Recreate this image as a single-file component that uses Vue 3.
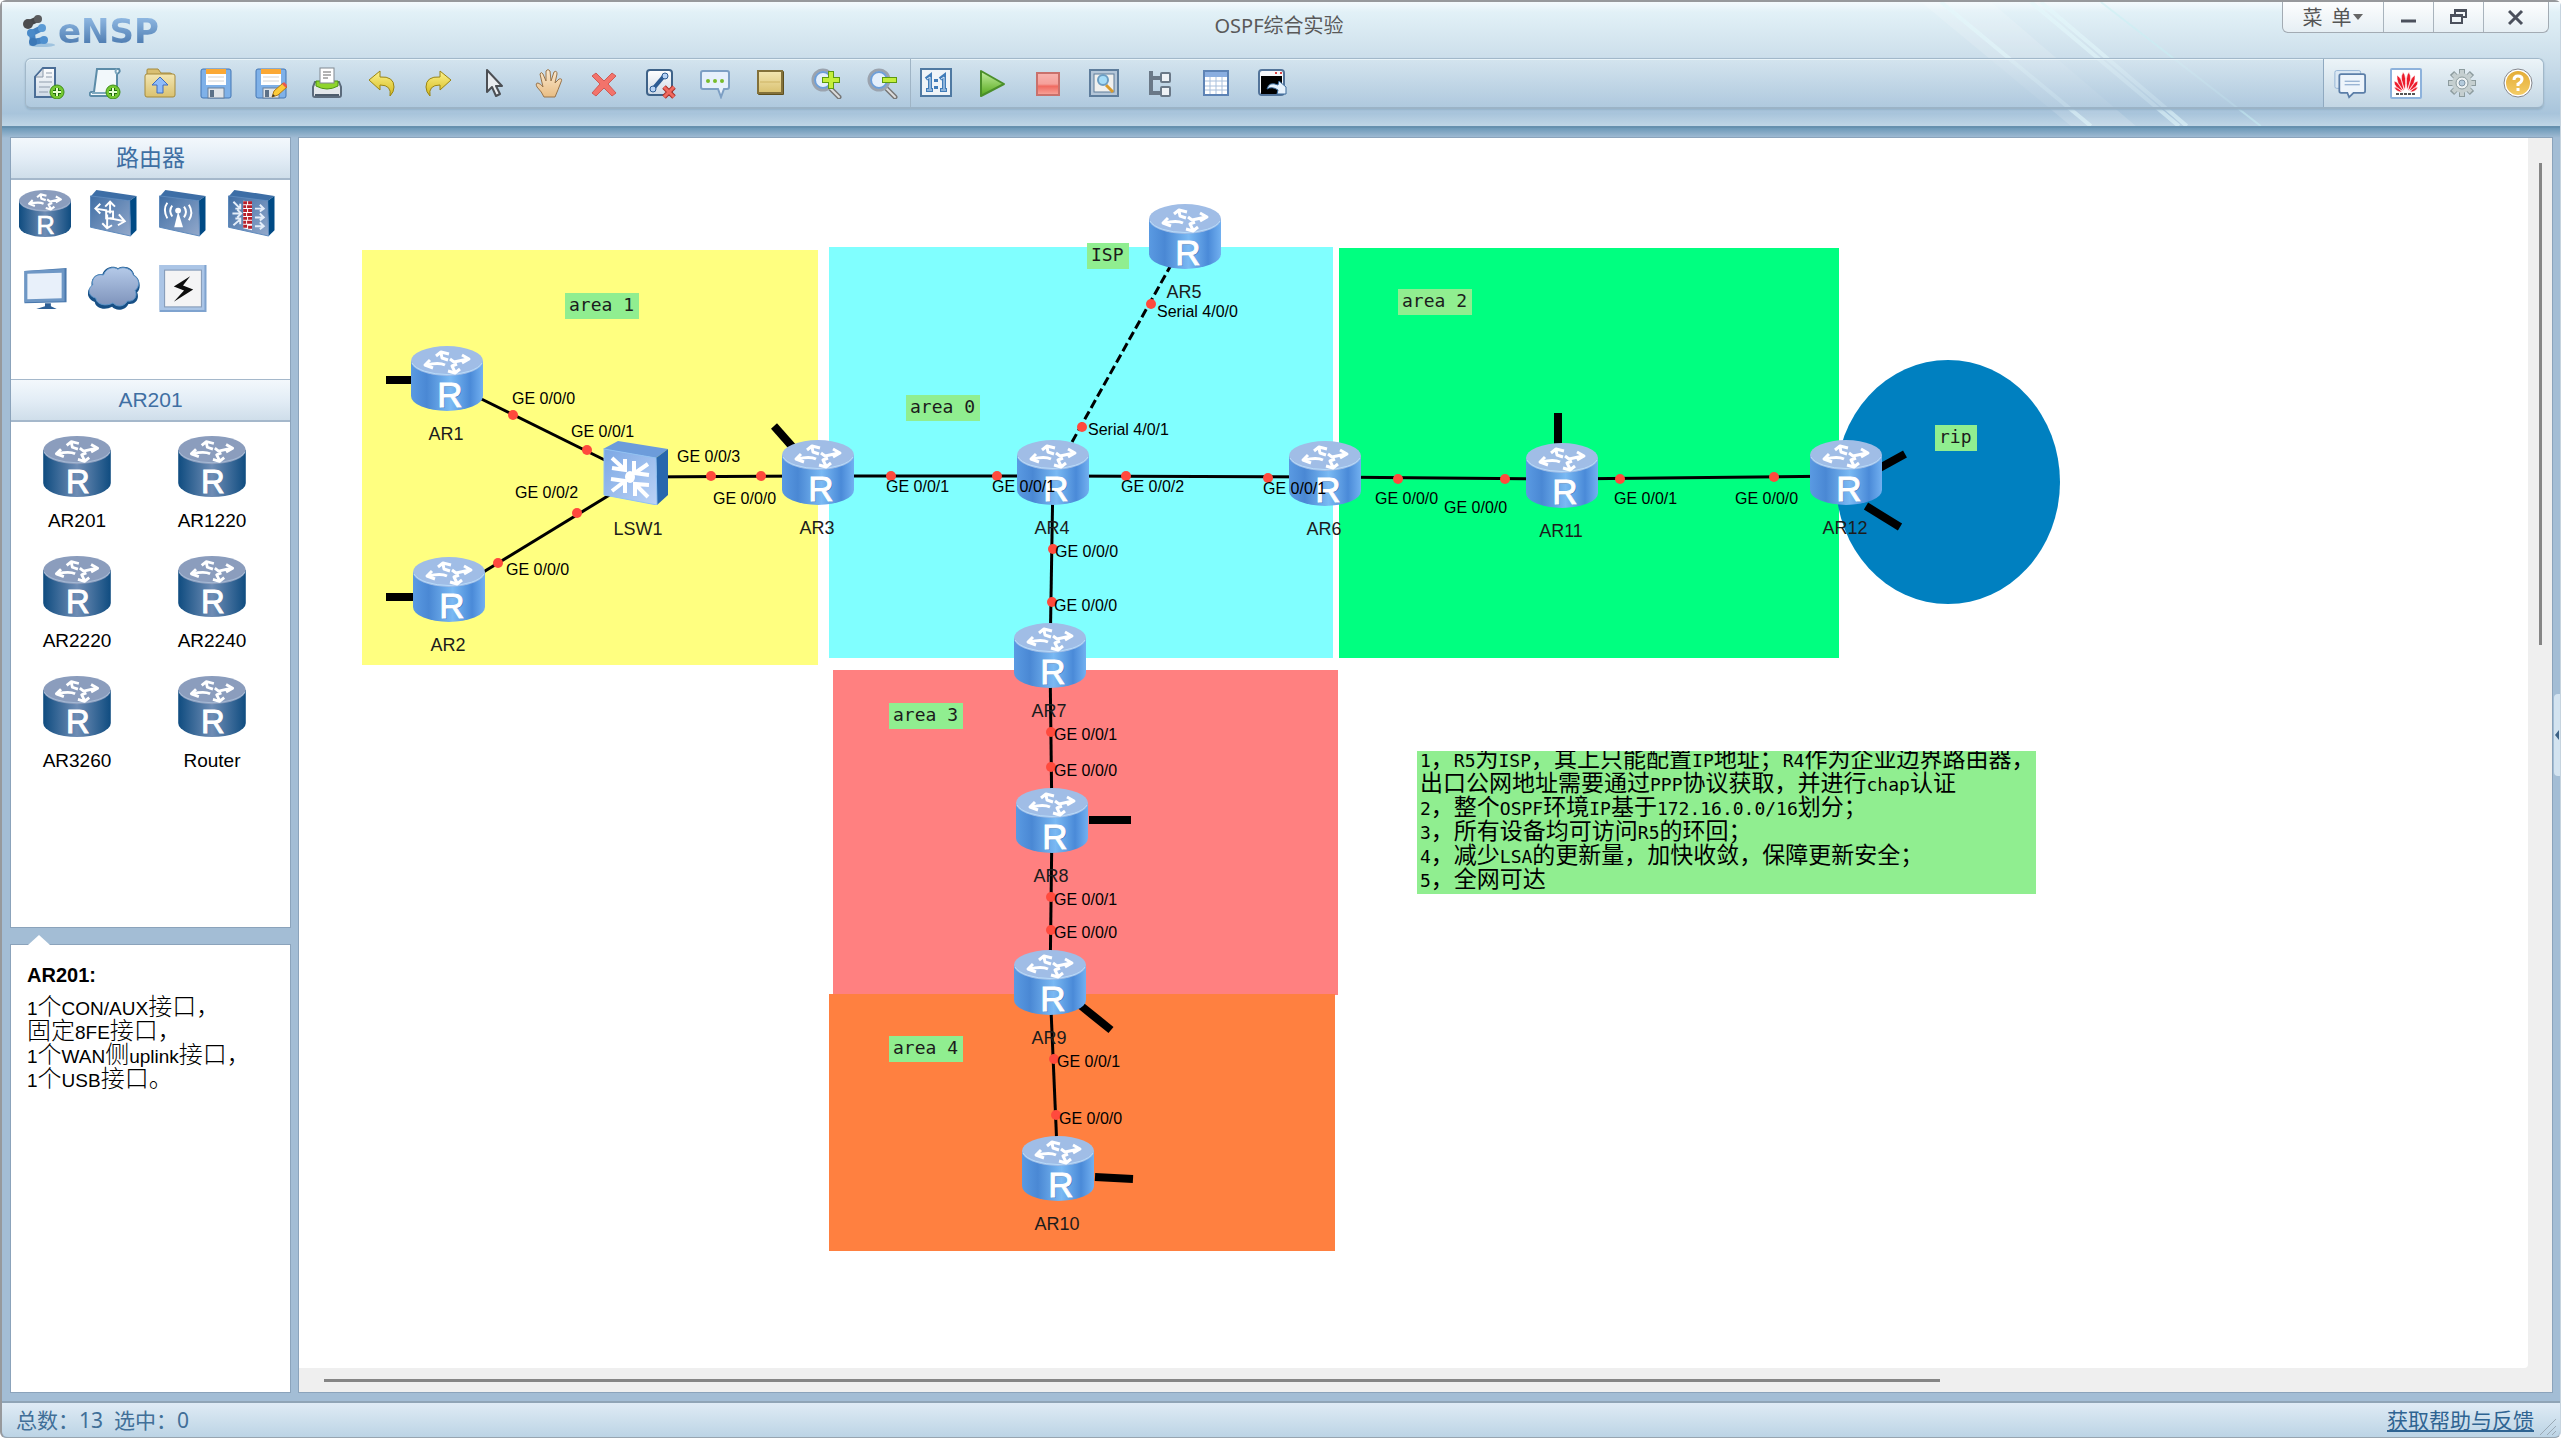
<template>
  <div class="window">
    <!-- shared drawings -->
    <svg class="sprite" width="0" height="0" aria-hidden="true">
      <defs>
        <linearGradient id="g-router">
          <stop offset="0" stop-color="#5a9ae2" />
          <stop offset=".22" stop-color="#4a88d4" />
          <stop offset=".55" stop-color="#7ab9f3" />
          <stop offset=".82" stop-color="#4a8ad8" />
          <stop offset="1" stop-color="#72b0f0" />
        </linearGradient>
        <linearGradient id="g-router-dark">
          <stop offset="0" stop-color="#0f4c80" />
          <stop offset=".5" stop-color="#6f8db5" />
          <stop offset="1" stop-color="#0f4c80" />
        </linearGradient>
        <linearGradient id="g-face" x2="1" y2="1">
          <stop offset="0" stop-color="#7ba7e4" />
          <stop offset="1" stop-color="#bcd3f6" />
        </linearGradient>
        <linearGradient id="g-face-dark" x2="1" y2="1">
          <stop offset="0" stop-color="#3f6ea5" />
          <stop offset="1" stop-color="#93a9cb" />
        </linearGradient>
        <linearGradient id="g-cloud" x2="0" y2="1">
          <stop offset="0" stop-color="#b4c9e8" />
          <stop offset="1" stop-color="#7e93bb" />
        </linearGradient>
        <linearGradient id="g-paper" x2="0" y2="1">
          <stop offset="0" stop-color="#ffffff" />
          <stop offset="1" stop-color="#cdd9e6" />
        </linearGradient>
        <linearGradient id="g-gold" x2="0" y2="1">
          <stop offset="0" stop-color="#f3e6b2" />
          <stop offset="1" stop-color="#d9c170" />
        </linearGradient>
        <linearGradient id="g-yellow" x2="0" y2="1">
          <stop offset="0" stop-color="#fdf38c" />
          <stop offset="1" stop-color="#d3b81c" />
        </linearGradient>
        <linearGradient id="g-green" x2="0" y2="1">
          <stop offset="0" stop-color="#c4efa0" />
          <stop offset="1" stop-color="#55a81c" />
        </linearGradient>
        <linearGradient id="g-red" x2="0" y2="1">
          <stop offset="0" stop-color="#f8b4b0" />
          <stop offset=".5" stop-color="#f5a09a" />
          <stop offset=".6" stop-color="#f06a60" />
          <stop offset="1" stop-color="#f8a69c" />
        </linearGradient>
        <linearGradient id="g-skin" x2="0" y2="1">
          <stop offset="0" stop-color="#fbe9cf" />
          <stop offset="1" stop-color="#e8bd84" />
        </linearGradient>
        <linearGradient id="g-help" x2="0" y2="1">
          <stop offset="0" stop-color="#e3ab35" />
          <stop offset="1" stop-color="#f5cd66" />
        </linearGradient>

        <g id="router-arrows" fill="none" stroke="#fff" stroke-width="3" stroke-linejoin="round">
          <path d="M25 10 30 6 38 8M30 7 31 12 37 14" />
          <path d="M51 9 58 13 51 17M39 13 43 16 57 13" />
          <path d="M37 25 44 27 49 23M46 18 41 20 44 26" />
          <path d="M19 14 14 19 22 22M34 19Q28 16 15 19" />
        </g>

        <symbol id="d-router" viewBox="0 0 72 65">
          <path d="M0 15V50A36 15 0 0 0 72 50V15Z" fill="url(#g-router)" />
          <ellipse cx="36" cy="15" rx="36" ry="15" fill="#a0bde6" />
          <path d="M1 17A36 15 0 0 0 71 17" fill="none" stroke="#b9dcfa" stroke-width="1" />
          <use href="#router-arrows" />
          <text x="40" y="62" class="letter" fill="#3a74b8">R</text>
          <text x="39" y="61" class="letter" fill="#fff" stroke="#fff">R</text>
        </symbol>
        <symbol id="d-router-dark" viewBox="0 0 72 65">
          <path d="M0 15V50A36 15 0 0 0 72 50V15Z" fill="url(#g-router-dark)" />
          <ellipse cx="36" cy="15" rx="36" ry="15" fill="#8b9dbd" />
          <path d="M1 17A36 15 0 0 0 71 17" fill="none" stroke="#a9bdd8" stroke-width="1" />
          <use href="#router-arrows" />
          <text x="37" y="61" class="letter" fill="#fff" stroke="#fff">R</text>
        </symbol>
        <symbol id="d-switch" viewBox="0 0 66 64">
          <path d="M0 8 15 0 65 8 53 17Z" fill="#6c9cdb" />
          <path d="M53 17 65 8V54L54 64Z" fill="#2867ad" />
          <path d="M1 8 53 17 54 64 1 54Z" fill="url(#g-face)" stroke="#8fc0f5" />
          <g fill="none" stroke="#fff" stroke-width="4">
            <path d="M9 17 22 29M22 18V29L9 27" />
            <path d="M45 23 32 32M31 20V32L46 34" />
            <path d="M9 50 22 40M8 38 22 40V52" />
            <path d="M45 56 32 43M46 44 32 43V55" />
          </g>
          <ellipse cx="27" cy="36" rx="5" ry="6" fill="#fff" />
        </symbol>

        <g id="box-dark">
          <path d="M0 7 6 0 47 6 40 11Z" fill="#3d6ea6" />
          <path d="M40 11 47 6V41L41 47Z" fill="#004a85" />
          <path d="M0 6 40 11 41 47 0 38Z" fill="url(#g-face-dark)" stroke="#5c88bb" />
        </g>
        <symbol id="c-router" viewBox="0 0 72 65"><use href="#d-router-dark" width="72" height="65" /></symbol>
        <symbol id="c-switch" viewBox="0 0 48 48">
          <use href="#box-dark" />
          <g fill="none" stroke="#fff" stroke-width="2">
            <path d="M20 24V13M15 17 20 12 25 17M17 25V38M12 34 17 39 22 36M17 21 5 19M10 14 5 19 10 24M20 29 35 32M29 25 35 32 28 36" />
            <rect x="16" y="22" width="7" height="7" />
          </g>
        </symbol>
        <symbol id="c-wlan" viewBox="0 0 48 48">
          <use href="#box-dark" />
          <path d="M19 22 24 38H15Z" fill="#fff" />
          <circle cx="19" cy="21" r="3" fill="#fff" />
          <path d="M13 16Q9 21 13 27M8 13Q3 20 8 29M25 17Q29 22 25 28M30 15Q35 23 30 31" fill="none" stroke="#fff" stroke-width="2" />
        </symbol>
        <symbol id="c-firewall" viewBox="0 0 48 48">
          <use href="#box-dark" />
          <path d="M15 11 24 12V41L15 39Z" fill="#fff" />
          <path d="M15 13H19M20 13H24M15 17H18M19 17H24M15 21H19M20 21H24M15 25H18M19 25H24M15 29H19M20 29H24M15 33H18M19 33H24M15 37H19M20 38H24" stroke="#b71f2a" stroke-width="3" />
          <path d="M5 12 12 19M7 19H12V14M4 24H12M9 20 13 24 9 28M5 36 12 30M7 29H12V35M27 19H36M32 15 36 19 32 22M27 28H36M32 24 36 28 32 31M27 37H36M32 33 36 37 32 40" fill="none" stroke="#e4edf8" stroke-width="2" />
        </symbol>
        <symbol id="c-pc" viewBox="0 0 48 48">
          <path d="M3 6 46 3V38L3 39Z" fill="#4978ad" />
          <path d="M3 6 44 4V37L3 38Z" fill="#6e97c5" />
          <path d="M6 9 41 8V34L6 35Z" fill="#e8f0fa" />
          <path d="M24 39H30V42L36 45H15L24 42Z" fill="#2c5f96" />
        </symbol>
        <symbol id="c-cloud" viewBox="0 0 54 46">
          <path d="M7 37C-2 34-2 24 4 21 2 13 8 7 15 8 18 0 27-1 31 2 38-2 47 2 48 9 55 13 55 24 51 27 54 34 49 40 42 39 38 47 28 46 25 42 18 46 8 44 7 37Z" fill="#174f85" />
          <path d="M8 33C0 31-1 23 5 19 3 13 9 7 16 9 19 1 27 0 31 3 37-1 46 3 47 9 54 13 54 21 49 25 52 32 47 37 41 36 37 43 29 42 26 38 19 42 9 40 8 33Z" fill="url(#g-cloud)" stroke="#5b93c7" stroke-width="1" />
        </symbol>
        <symbol id="c-link" viewBox="0 0 46 46">
          <rect width="46" height="46" fill="#7fa3cf" />
          <rect width="44" height="44" fill="#abc5e6" />
          <rect x="5" y="5" width="36" height="36" fill="#f4f4f5" stroke="#8298b5" />
          <path d="M30 11 14 21 24 25 14 36 33 24 23 20Z" fill="#0d0d0d" />
        </symbol>

        <g id="plus-badge">
          <circle cx="24" cy="25" r="7" fill="#74c832" stroke="#3f8f18" />
          <path d="M24 21V29M20 25H28" stroke="#1f6b0b" stroke-width="4" />
          <path d="M24 21V29M20 25H28" stroke="#e6ffd0" stroke-width="2" />
        </g>
        <g id="floppy">
          <rect x="1" y="2" width="30" height="29" rx="2" fill="#7fb1e8" stroke="#4577b4" />
          <rect x="6" y="3" width="20" height="15" fill="#fff" />
          <rect x="6" y="2" width="20" height="5" fill="#fba834" />
          <path d="M8 10H24M8 14H24" stroke="#d4d4d4" />
          <rect x="8" y="21" width="16" height="10" fill="#e0e4e8" stroke="#68809c" />
          <rect x="10" y="23" width="4" height="7" fill="#5c7188" />
        </g>
        <g id="lens">
          <path d="M19 20 29 30" stroke="#777" stroke-width="5" stroke-linecap="round" />
          <path d="M19 20 29 30" stroke="#ddd" stroke-width="2" stroke-linecap="round" />
          <circle cx="13" cy="13" r="10" fill="#dbe9fa" stroke="#9ba3ae" stroke-width="3" />
          <circle cx="13" cy="13" r="8" fill="#e4effc" stroke="#6d9ed8" stroke-width="2" />
        </g>
        <g id="tiny-cross">
          <path d="M20 20 30 30M30 20 20 30" stroke="#a82f28" stroke-width="5" />
          <path d="M20 20 30 30M30 20 20 30" stroke="#f0695f" stroke-width="3" />
        </g>

        <symbol id="i-new" viewBox="0 0 32 32">
          <path d="M10 1H22V30H2V10Z" fill="url(#g-paper)" stroke="#4a6d96" stroke-width="2" />
          <path d="M10 2V10H3" fill="#dde3ea" stroke="#8b99aa" />
          <path d="M6 15H19M6 20H17M6 25H15M13 6H19M13 10H19" stroke="#8f9cac" />
          <use href="#plus-badge" />
        </symbol>
        <symbol id="i-scroll" viewBox="0 0 32 32">
          <path d="M8 2H30Q32 5 28 7V29H2Q-1 27 2 25H5Z" fill="#f2f8fb" stroke="#5c8ca8" stroke-width="2" />
          <path d="M28 2Q25 4 28 7M3 26H20" fill="none" stroke="#7ea8bf" stroke-width="2" />
          <use href="#plus-badge" />
        </symbol>
        <symbol id="i-open" viewBox="0 0 32 32">
          <path d="M3 8V3Q3 2 4 2H14L17 6H26Q28 6 28 8Z" fill="#d9bf72" stroke="#a58a3c" />
          <rect x="1" y="7" width="30" height="23" rx="2" fill="url(#g-gold)" stroke="#a58a3c" />
          <path d="M16 10 24 18H19V26H13V18H8Z" fill="#8fbcfa" stroke="#3c6bc0" />
        </symbol>
        <symbol id="i-save" viewBox="0 0 32 32"><use href="#floppy" /></symbol>
        <symbol id="i-saveas" viewBox="0 0 32 32">
          <use href="#floppy" />
          <path d="M17 30 19 24 28 16 32 20 23 28Z" fill="#fccb38" stroke="#b07a14" />
          <path d="M27 17 29 15 32 18 31 21Z" fill="#e9584c" />
          <path d="M17 30 18 27 20 29Z" fill="#333" />
        </symbol>
        <symbol id="i-print" viewBox="0 0 32 32">
          <path d="M4 15H28L30 20V28Q30 30 28 30H4Q2 30 2 28V20Z" fill="#e3e7eb" stroke="#5b6b7c" stroke-width="2" />
          <path d="M5 14H27V19Q16 25 5 19Z" fill="#8fd42c" stroke="#4d9412" />
          <rect x="9" y="1" width="14" height="15" fill="#fff" stroke="#808890" />
          <path d="M12 5H20M12 8H20M12 11H17" stroke="#666" />
          <path d="M4 28H28" stroke="#4e5d6d" stroke-width="2" />
        </symbol>
        <symbol id="i-undo" viewBox="0 0 32 32">
          <path d="M3 13 14 4V10Q28 9 28 20 28 25 24 29 26 18 14 18V23Z" fill="url(#g-yellow)" stroke="#9a8412" stroke-linejoin="round" />
        </symbol>
        <symbol id="i-redo" viewBox="0 0 32 32">
          <path d="M29 13 18 4V10Q4 9 4 20 4 25 8 29 6 18 18 18V23Z" fill="url(#g-yellow)" stroke="#9a8412" stroke-linejoin="round" />
        </symbol>
        <symbol id="i-cursor" viewBox="0 0 32 32">
          <path d="M10 3V25L15 20 19 29 23 27 19 19H25Z" fill="#e9ecef" stroke="#4c4f54" stroke-width="2" stroke-linejoin="round" />
        </symbol>
        <symbol id="i-hand" viewBox="0 0 32 32">
          <path d="M11 30Q9 25 4 20 2 16 5 16 8 17 10 20L7 7Q8 4 10 7L13 14V4Q15 1 17 4L18 14 21 5Q24 3 24 7L22 16 26 12Q30 11 28 15 25 23 22 30Z" fill="url(#g-skin)" stroke="#99744a" stroke-linejoin="round" />
        </symbol>
        <symbol id="i-delete" viewBox="0 0 32 32">
          <path d="M8 6 16 14 24 6 28 9 20 17 28 26 24 29 16 21 8 29 4 26 12 17 4 9Z" fill="#f3736b" stroke="#cf5a55" stroke-linejoin="round" />
        </symbol>
        <symbol id="i-cutlink" viewBox="0 0 32 32">
          <rect x="3" y="3" width="25" height="25" rx="3" fill="url(#g-paper)" stroke="#3e6288" stroke-width="2" />
          <path d="M9 22 20 9" stroke="#2c5b93" stroke-width="4" />
          <circle cx="9" cy="22" r="3" fill="#b7d3f5" stroke="#2c5b93" />
          <circle cx="21" cy="9" r="3" fill="#b7d3f5" stroke="#2c5b93" />
          <use href="#tiny-cross" />
        </symbol>
        <symbol id="i-text" viewBox="0 0 32 32">
          <path d="M4 4H28Q30 4 30 6V20Q30 22 28 22H25L22 30 19 22H4Q2 22 2 20V6Q2 4 4 4Z" fill="#e6f0fc" stroke="#7d9fc4" stroke-width="2" />
          <g fill="#79bc2c"><circle cx="9" cy="14" r="2" /><circle cx="16" cy="14" r="2" /><circle cx="23" cy="14" r="2" /></g>
        </symbol>
        <symbol id="i-palette" viewBox="0 0 32 32">
          <rect x="3" y="4" width="26" height="24" rx="1" fill="#5e4f1e" />
          <rect x="3" y="4" width="24" height="22" fill="url(#g-gold)" stroke="#83713a" stroke-width="2" />
          <path d="M5 15H25" stroke="#cdb465" />
        </symbol>
        <symbol id="i-zoomin" viewBox="0 0 32 32">
          <use href="#lens" />
          <path d="M21 4V22M12 13H30" stroke="#5d9a10" stroke-width="6" />
          <path d="M21 5V21M13 13H29" stroke="#c4ee3c" stroke-width="4" />
        </symbol>
        <symbol id="i-zoomout" viewBox="0 0 32 32">
          <use href="#lens" />
          <path d="M16 13H31" stroke="#5d9a10" stroke-width="6" />
          <path d="M17 13H30" stroke="#c4ee3c" stroke-width="4" />
        </symbol>
        <symbol id="i-fit" viewBox="0 0 32 32">
          <rect x="1" y="2" width="30" height="27" fill="#eff4f8" stroke="#4f79a2" stroke-width="2" />
          <path d="M6 12 10 9V22M6 23H13M20 12 24 9V22M20 23H27M16 12V15M16 19V22" fill="none" stroke="#417cb8" stroke-width="4" />
          <path d="M7 12 10 10V22M7 23H12M21 12 24 10V22M21 23H26" fill="none" stroke="#d8eafc" stroke-width="1" />
        </symbol>
        <symbol id="i-play" viewBox="0 0 32 32">
          <path d="M5 4 28 17 5 29Z" fill="url(#g-green)" stroke="#4b8f2a" stroke-width="2" stroke-linejoin="round" />
        </symbol>
        <symbol id="i-stop" viewBox="0 0 32 32">
          <rect x="5" y="6" width="22" height="22" fill="url(#g-red)" stroke="#c9716c" stroke-width="2" />
        </symbol>
        <symbol id="i-inspect" viewBox="0 0 32 32">
          <rect x="2" y="3" width="28" height="26" fill="#b4c6d8" stroke="#5e7d9c" stroke-width="2" />
          <rect x="6" y="7" width="20" height="18" fill="#f0f0ee" stroke="#5e7c9a" />
          <path d="M18 18 25 25" stroke="#d89a2c" stroke-width="3" />
          <circle cx="15" cy="13" r="5" fill="#a5dcf8" stroke="#6c9dc2" stroke-width="2" />
        </symbol>
        <symbol id="i-tree" viewBox="0 0 32 32">
          <path d="M7 4V26H17M7 11H17" fill="none" stroke="#6a7887" stroke-width="4" />
          <rect x="17" y="6" width="9" height="9" rx="1" fill="#eef2f6" stroke="#6a7887" stroke-width="2" />
          <rect x="17" y="20" width="9" height="9" rx="1" fill="#eef2f6" stroke="#6a7887" stroke-width="2" />
        </symbol>
        <symbol id="i-table" viewBox="0 0 32 32">
          <rect x="4" y="4" width="24" height="24" fill="#fff" stroke="#5d83b5" stroke-width="2" />
          <rect x="5" y="5" width="22" height="5" fill="#8aaee0" />
          <path d="M5 14H27M5 19H27M5 23H27M10 10V27M16 10V27M22 10V27" stroke="#a9c0dc" />
        </symbol>
        <symbol id="i-console" viewBox="0 0 32 32">
          <rect x="3" y="3" width="25" height="25" rx="3" fill="#f5f7fa" stroke="#53749a" stroke-width="2" />
          <rect x="5" y="9" width="21" height="18" fill="#000" />
          <path d="M19 6H21M24 6H26" stroke="#d44" stroke-width="2" />
          <path d="M11 22Q13 14 22 18L23 14 30 20V27H21L22 23Q16 19 11 22Z" fill="#e5f1fc" stroke="#3b6b9c" />
        </symbol>
        <symbol id="i-chat" viewBox="0 0 36 32">
          <rect x="1" y="2" width="29" height="20" rx="2" fill="#dbe8f4" stroke="#8fb0d2" />
          <path d="M8 6H33Q35 6 35 8V25Q35 27 33 27H22L17 32 15 27H8Q6 27 6 25V8Q6 6 8 6Z" fill="#edf4fb" stroke="#5b7ea8" stroke-width="2" />
          <path d="M12 14H29M12 18H29" stroke="#6c91bd" stroke-width="1" />
        </symbol>
        <symbol id="i-huawei" viewBox="0 0 32 32">
          <rect x="1" y="2" width="30" height="29" rx="1" fill="#fff" stroke="#8db2dc" stroke-width="2" />
          <g fill="#ec1c2c" stroke="#fff" stroke-width=".6">
            <path d="M15 23Q9 12 13 5 17 9 15 23ZM17 23Q23 12 19 5 15 9 17 23ZM14 24Q6 17 7 8 13 12 14 24ZM18 24Q26 17 25 8 19 12 18 24ZM13 24Q4 21 4 14 9 15 13 24ZM19 24Q28 21 28 14 23 15 19 24ZM12 25Q6 25 4 20 9 20 12 25ZM20 25Q26 25 28 20 23 20 20 25Z" />
          </g>
          <path d="M6 27H26" stroke="#555" stroke-width="2" stroke-dasharray="3 1" />
        </symbol>
        <symbol id="i-gear" viewBox="0 0 32 32">
          <path d="M16 2V30M2 16H30M6 6 26 26M26 6 6 26" stroke="#8c9b9e" stroke-width="6" />
          <path d="M16 3V29M3 16H29M7 7 25 25M25 7 7 25" stroke="#c5cfd0" stroke-width="4" />
          <circle cx="16" cy="16" r="10" fill="#c5cfd0" />
          <circle cx="16" cy="16" r="6" fill="#eef3f4" stroke="#8c9b9e" />
          <circle cx="16" cy="16" r="3" fill="#b5cbdc" stroke="#8195a5" />
        </symbol>
        <symbol id="i-help" viewBox="0 0 32 32">
          <circle cx="16" cy="16" r="13" fill="url(#g-help)" stroke="#fff" stroke-width="2" />
          <circle cx="16" cy="16" r="14" fill="none" stroke="#84868c" stroke-width="1" />
          <path d="M12 13Q12 9 16 9 20 9 20 12 20 15 16 17V19M16 21V24" fill="none" stroke="#fff" stroke-width="3" />
        </symbol>
      </defs>
    </svg>

    <header class="header">
      <svg class="streaks" viewBox="0 0 640 126" preserveAspectRatio="none" aria-hidden="true">
        <path d="M0 0H70L215 126H150Z" fill="#fff" opacity=".14" />
        <path d="M110 0 258 126M120 0 266 126M20 0 170 126" stroke="#e4f9fc" stroke-width="4" opacity=".55" />
        <path d="M180 0 340 126" stroke="#c8f0f4" stroke-width="2" opacity=".5" />
      </svg>
      <div class="titlebar">
        <div class="logo">
          <svg width="34" height="34" viewBox="0 0 34 34" aria-hidden="true">
            <ellipse cx="20" cy="32" rx="13" ry="2" fill="#9fc3df" />
            <path d="M5 11 16 6" stroke="#454648" stroke-width="6" />
            <circle cx="6" cy="11" r="5" fill="#4b4c4e" />
            <circle cx="16" cy="6" r="4" fill="#5a5b5d" />
            <path d="M20 15 10 20 11 29 22 27" stroke="#4583c2" stroke-width="6" fill="none" stroke-linejoin="round" />
            <circle cx="20" cy="15" r="4" fill="#5b9bd5" />
            <circle cx="9" cy="20" r="4" fill="#4a8ac8" />
            <circle cx="11" cy="29" r="4" fill="#3c78b6" />
            <circle cx="22" cy="27" r="4" fill="#4f90cf" />
          </svg>
          <span class="logo-text">eNSP</span>
        </div>
        <h1 class="title">OSPF综合实验</h1>
        <div class="window-buttons">
          <button class="menu-button">菜&nbsp; 单<i class="caret"></i></button>
          <button aria-label="最小化"><svg width="16" height="18" viewBox="0 0 16 18"><path d="M0 13H15" stroke="#4b505c" stroke-width="3" /></svg></button>
          <button aria-label="还原"><svg width="18" height="18" viewBox="0 0 18 18"><path d="M5 6V2H16V9H12M5 3H16M1 7H12V15H1ZM1 8H12" fill="none" stroke="#4b505c" stroke-width="2" /></svg></button>
          <button class="close-button" aria-label="关闭"><svg width="16" height="18" viewBox="0 0 16 18"><path d="M1 3 14 16M14 3 1 16" stroke="#4b505c" stroke-width="3" /></svg></button>
        </div>
      </div>
      <div class="toolbar">
        <div class="tools tools-edit">
          <button v-for="t in editTools" :key="t.icon" :aria-label="t.label">
            <svg width="32" height="32"><use :href="'#i-' + t.icon" /></svg>
          </button>
        </div>
        <div class="tools tools-run">
          <button v-for="t in runTools" :key="t.icon" :aria-label="t.label">
            <svg width="32" height="32"><use :href="'#i-' + t.icon" /></svg>
          </button>
        </div>
        <div class="tools tools-help">
          <button v-for="t in helpTools" :key="t.icon" :aria-label="t.label">
            <svg width="32" height="32"><use :href="'#i-' + t.icon" /></svg>
          </button>
        </div>
      </div>
    </header>

    <main class="main">
      <aside class="sidebar">
        <section class="panel">
          <h2 class="panel-title">路由器</h2>
          <div class="categories">
            <button v-for="c in categories" :key="c.icon" :aria-label="c.label">
              <svg width="52" height="47"><use :href="'#c-' + c.icon" /></svg>
            </button>
          </div>
          <h2 class="panel-title model-title">AR201</h2>
          <div class="models">
            <button v-for="m in models" :key="m">
              <svg width="68" height="61"><use href="#d-router-dark" /></svg>
              <span>{{ m }}</span>
            </button>
          </div>
        </section>
        <section class="panel info">
          <h3>AR201:</h3>
          <p v-for="line in info" :key="line">
            <span v-for="(part, i) in splitCjk(line)" :key="i" :class="{ cjk: i % 2 }">{{ part }}</span>
          </p>
        </section>
      </aside>

      <section class="workspace">
        <div class="canvas">
          <div class="sheet" :style="{ left: -origin.x + 'px', top: -origin.y + 'px' }">
            <svg class="drawing" width="2300" height="1400">
              <rect v-for="a in areas" :key="a.fill" v-bind="a" />
              <ellipse cx="1948" cy="482" rx="112" ry="122" fill="#0080c0" />
              <line v-for="(s, i) in stubs" :key="'s' + i" :x1="s[0]" :y1="s[1]" :x2="s[2]" :y2="s[3]" stroke="#000" stroke-width="8" />
              <line
                v-for="([a, b, dash], i) in links"
                :key="'l' + i"
                :x1="center(a).x"
                :y1="center(a).y"
                :x2="center(b).x"
                :y2="center(b).y"
                :stroke-dasharray="dash ? '9 4' : null"
                stroke="#000"
                stroke-width="3"
              />
              <g v-for="d in devices" :key="d.name">
                <use :href="d.type === 'switch' ? '#d-switch' : '#d-router'" :x="d.x" :y="d.y" :width="d.type === 'switch' ? 66 : 72" :height="d.type === 'switch' ? 64 : 65" />
                <text class="device-name" :x="d.x + 35" :y="d.y + 94">{{ d.name }}</text>
              </g>
              <g v-for="(p, i) in ports" :key="'p' + i">
                <circle :cx="p[0]" :cy="p[1]" r="5" fill="#ff4a3d" />
                <text class="port-name" :x="p[2]" :y="p[3] + 6">{{ p[4] }}</text>
              </g>
            </svg>
            <div v-for="t in tags" :key="t.text" class="tag" :style="{ left: t.x + 'px', top: t.y + 'px' }">{{ t.text }}</div>
            <div class="note">
              <p v-for="line in notes" :key="line">
                <span v-for="(part, i) in splitCjk(line)" :key="i" :class="{ cjk: i % 2 }">{{ part }}</span>
              </p>
            </div>
          </div>
        </div>
        <div class="scroll-y"><div class="thumb-y"></div></div>
        <div class="scroll-x"><div class="thumb-x"></div></div>
      </section>
      <div class="drawer-handle"></div>
    </main>

    <footer class="statusbar">
      <span>总数：13&nbsp; 选中：0</span>
      <a href="#">获取帮助与反馈</a>
      <svg class="grip" width="16" height="16" viewBox="0 0 16 16" aria-hidden="true">
        <path d="M0 16 16 0M7 16 16 7M12 16 16 12" stroke="#9aa9b5" stroke-width="1" />
      </svg>
    </footer>
  </div>
</template>

<script setup>
const editTools = [
  { icon: 'new', label: '新建拓扑' },
  { icon: 'scroll', label: '新建试卷' },
  { icon: 'open', label: '打开' },
  { icon: 'save', label: '保存' },
  { icon: 'saveas', label: '另存为' },
  { icon: 'print', label: '打印' },
  { icon: 'undo', label: '撤销' },
  { icon: 'redo', label: '恢复' },
  { icon: 'cursor', label: '选择' },
  { icon: 'hand', label: '拖动' },
  { icon: 'delete', label: '删除' },
  { icon: 'cutlink', label: '删除连线' },
  { icon: 'text', label: '文本' },
  { icon: 'palette', label: '调色板' },
  { icon: 'zoomin', label: '放大' },
  { icon: 'zoomout', label: '缩小' }
]
const runTools = [
  { icon: 'fit', label: '原始大小' },
  { icon: 'play', label: '开启设备' },
  { icon: 'stop', label: '停止设备' },
  { icon: 'inspect', label: '数据抓包' },
  { icon: 'tree', label: '显示接口' },
  { icon: 'table', label: '显示网格' },
  { icon: 'console', label: '打开命令行' }
]
const helpTools = [
  { icon: 'chat', label: '论坛' },
  { icon: 'huawei', label: '官网' },
  { icon: 'gear', label: '设置' },
  { icon: 'help', label: '帮助' }
]

const categories = [
  { icon: 'router', label: '路由器' },
  { icon: 'switch', label: '交换机' },
  { icon: 'wlan', label: '无线局域网' },
  { icon: 'firewall', label: '防火墙' },
  { icon: 'pc', label: '终端' },
  { icon: 'cloud', label: '其它设备' },
  { icon: 'link', label: '设备连线' }
]
const models = ['AR201', 'AR1220', 'AR2220', 'AR2240', 'AR3260', 'Router']
const info = ['1个CON/AUX接口，', '固定8FE接口，', '1个WAN侧uplink接口，', '1个USB接口。']

// top left corner of the visible part of the sheet
const origin = { x: 299, y: 138 }

const areas = [
  { x: 362, y: 250, width: 456, height: 415, fill: '#ffff80' },
  { x: 829, y: 247, width: 504, height: 411, fill: '#80ffff' },
  { x: 1339, y: 248, width: 500, height: 410, fill: '#00ff80' },
  { x: 833, y: 670, width: 505, height: 325, fill: '#ff8080' },
  { x: 829, y: 994, width: 506, height: 257, fill: '#ff8040' }
]

const devices = [
  { name: 'AR1', x: 411, y: 346 },
  { name: 'AR2', x: 413, y: 557 },
  { name: 'LSW1', x: 603, y: 441, type: 'switch' },
  { name: 'AR3', x: 782, y: 440 },
  { name: 'AR4', x: 1017, y: 440 },
  { name: 'AR5', x: 1149, y: 204 },
  { name: 'AR6', x: 1289, y: 441 },
  { name: 'AR7', x: 1014, y: 623 },
  { name: 'AR8', x: 1016, y: 788 },
  { name: 'AR9', x: 1014, y: 950 },
  { name: 'AR10', x: 1022, y: 1136 },
  { name: 'AR11', x: 1526, y: 443 },
  { name: 'AR12', x: 1810, y: 440 }
]

const links = [
  ['AR1', 'LSW1'],
  ['AR2', 'LSW1'],
  ['LSW1', 'AR3'],
  ['AR3', 'AR4'],
  ['AR4', 'AR5', true],
  ['AR4', 'AR6'],
  ['AR4', 'AR7'],
  ['AR7', 'AR8'],
  ['AR8', 'AR9'],
  ['AR9', 'AR10'],
  ['AR6', 'AR11'],
  ['AR11', 'AR12']
]

const stubs = [
  [386, 380, 420, 380],
  [386, 597, 420, 597],
  [774, 426, 797, 452],
  [1558, 413, 1558, 450],
  [1876, 470, 1905, 454],
  [1866, 506, 1900, 527],
  [1089, 820, 1131, 820],
  [1080, 1005, 1111, 1030],
  [1095, 1177, 1133, 1179]
]

// dot x, dot y, label x, label middle, label
const ports = [
  [513, 415, 512, 398, 'GE 0/0/0'],
  [587, 450, 571, 431, 'GE 0/0/1'],
  [711, 476, 677, 456, 'GE 0/0/3'],
  [761, 476, 713, 498, 'GE 0/0/0'],
  [577, 513, 515, 492, 'GE 0/0/2'],
  [498, 563, 506, 569, 'GE 0/0/0'],
  [891, 476, 886, 486, 'GE 0/0/1'],
  [997, 476, 992, 486, 'GE 0/0/1'],
  [1126, 476, 1121, 486, 'GE 0/0/2'],
  [1268, 478, 1263, 488, 'GE 0/0/1'],
  [1151, 304, 1157, 311, 'Serial 4/0/0'],
  [1082, 427, 1088, 429, 'Serial 4/0/1'],
  [1053, 549, 1055, 551, 'GE 0/0/0'],
  [1052, 602, 1054, 605, 'GE 0/0/0'],
  [1398, 479, 1375, 498, 'GE 0/0/0'],
  [1505, 479, 1444, 507, 'GE 0/0/0'],
  [1620, 479, 1614, 498, 'GE 0/0/1'],
  [1774, 477, 1735, 498, 'GE 0/0/0'],
  [1051, 732, 1054, 734, 'GE 0/0/1'],
  [1051, 767, 1054, 770, 'GE 0/0/0'],
  [1051, 897, 1054, 899, 'GE 0/0/1'],
  [1051, 930, 1054, 932, 'GE 0/0/0'],
  [1054, 1059, 1057, 1061, 'GE 0/0/1'],
  [1056, 1115, 1059, 1118, 'GE 0/0/0']
]

const tags = [
  { text: 'area 1', x: 565, y: 293 },
  { text: 'area 0', x: 906, y: 395 },
  { text: 'ISP', x: 1087, y: 243 },
  { text: 'area 2', x: 1398, y: 289 },
  { text: 'rip', x: 1935, y: 425 },
  { text: 'area 3', x: 889, y: 703 },
  { text: 'area 4', x: 889, y: 1036 }
]

const notes = [
  '1，R5为ISP，其上只能配置IP地址；R4作为企业边界路由器，',
  '出口公网地址需要通过PPP协议获取，并进行chap认证',
  '2，整个OSPF环境IP基于172.16.0.0/16划分；',
  '3，所有设备均可访问R5的环回；',
  '4，减少LSA的更新量，加快收敛，保障更新安全；',
  '5，全网可达'
]

const center = (name) => {
  const d = devices.find((item) => item.name === name)
  return { x: d.x + 36, y: d.y + 36 }
}

// odd parts are the Chinese runs
const splitCjk = (line) => line.split(/([\u3000-\u9fff\uff00-\uffef]+)/)
</script>

<style>
html,
body,
#app {
  height: 100%;
}
body {
  margin: 0;
}
</style>

<style scoped>
.window {
  display: flex;
  flex-direction: column;
  min-height: 100%;
  box-sizing: border-box;
  border: 2px solid #97999c;
  border-right: 1px solid #c5d3de;
  border-bottom: 1px solid #97a5b0;
  border-radius: 6px;
  background: #a3bdd5;
  font-family: "Liberation Sans", "Noto Sans CJK SC", sans-serif;
  color: #000;
}
.sprite {
  position: absolute;
}
.letter {
  font: 35px "Liberation Sans", sans-serif;
  text-anchor: middle;
}
button {
  padding: 0;
  border: 0;
  background: none;
  font: inherit;
  color: inherit;
}
svg {
  display: block;
}
h1,
h2,
h3,
p {
  margin: 0;
  font-weight: normal;
}

/* header */
.header {
  position: relative;
  height: 124px;
  border-bottom: 2px solid #6690ae;
  background: linear-gradient(#f4fafd, #e2f1f7 8%, #c9dce9 50%, #a8c4db 90%, #c0d6e6);
}
.streaks {
  position: absolute;
  right: 0;
  top: 0;
  width: 25%;
  height: 100%;
}
.titlebar {
  position: relative;
  display: grid;
  grid-template-columns: 1fr auto 1fr;
  height: 56px;
}
.logo {
  display: flex;
  align-items: center;
  gap: 2px;
  padding-left: 20px;
}
.logo-text {
  font: bold 34px/48px "DejaVu Sans", sans-serif;
  padding-top: 2px;
  color: transparent;
  background: linear-gradient(#8fb8e2 25%, #5280b4 75%);
  background-clip: text;
}
.title {
  padding: 9px 4px 0 0;
  font: 20px/30px "Noto Sans", "Noto Sans CJK SC", sans-serif;
  color: #595959;
}
.window-buttons {
  justify-self: end;
  display: flex;
  height: 30px;
  margin-right: 11px;
  border: 1px solid #a3abb3;
  border-top: 0;
  border-radius: 0 0 6px 6px;
  background: linear-gradient(#fdfefe, #e6eff4);
}
.window-buttons button {
  display: flex;
  align-items: center;
  justify-content: center;
  width: 50px;
  border-left: 1px solid #a9b4bd;
}
.window-buttons .menu-button {
  width: 100px;
  border-left: 0;
  font: 20px/30px "Noto Sans CJK SC", sans-serif;
  color: #555;
}
.window-buttons .close-button {
  width: 65px;
}
.caret {
  border: 5px solid transparent;
  border-top: 6px solid #666;
  border-bottom: 0;
  margin-left: 2px;
}
.toolbar {
  position: relative;
  display: flex;
  height: 51px;
  margin: 0 16px 0 23px;
  border: 1px solid #a2b8c9;
  border-bottom: 2px solid #9bb3c6;
  border-radius: 6px;
  box-sizing: border-box;
  box-shadow: inset 0 1px #e9f4f9, 0 1px 2px #93b2ca;
  background: linear-gradient(#d9e8f199, #b1cadf99);
}
.tools {
  display: flex;
  align-items: center;
  box-sizing: border-box;
}
.tools-edit {
  justify-content: space-between;
  width: 885px;
  padding: 0 12px 0 7px;
  border-right: 1px solid #9fb4c5;
}
.tools-run {
  gap: 24px;
  padding-left: 9px;
}
.tools-help {
  gap: 24px;
  margin-left: auto;
  padding: 0 9px 0 10px;
  border-left: 1px solid #8fa9c0;
  border-radius: 0 6px 6px 0;
  background: linear-gradient(#ecf4f8, #c3d6e4);
}

/* body */
.main {
  position: relative;
  flex: 1;
  display: flex;
  gap: 7px;
  padding: 9px 7px 8px 8px;
  background: linear-gradient(#6d99b8, #a3bdd5 10px);
}
.sidebar {
  flex: none;
  display: flex;
  flex-direction: column;
  gap: 16px;
  width: 281px;
}
.panel {
  border: 1px solid #8ba3bb;
  background: #fff;
}
.panel-title {
  border-bottom: 2px solid #a5b8cb;
  background: linear-gradient(#f3f8fc, #e3edf6 50%, #cfdeea);
  font: 23px/40px "Liberation Sans", "Noto Sans CJK SC", sans-serif;
  text-align: center;
  color: #3f6fa3;
}
.model-title {
  border-top: 1px solid #a5b8cb;
  font-size: 21px;
}
.categories {
  display: grid;
  grid-template-columns: repeat(4, 52px);
  column-gap: 17px;
  row-gap: 28px;
  height: 189px;
  padding: 10px 8px 0;
  align-content: start;
}
.models {
  display: grid;
  grid-template-columns: repeat(2, 132px);
  grid-auto-rows: 120px;
  column-gap: 3px;
  min-height: 491px;
  padding-top: 14px;
}
.models button {
  display: flex;
  flex-direction: column;
  align-items: center;
  justify-content: flex-start;
  gap: 13px;
  font-size: 19px;
  line-height: 22px;
}
.info {
  position: relative;
  flex: 1;
  padding: 18px 16px;
  font-size: 19px;
  line-height: 24px;
}
.info::before {
  content: '';
  position: absolute;
  left: 17px;
  top: -10px;
  border: 11px solid transparent;
  border-top: 0;
  border-bottom: 10px solid #fff;
}
.info h3 {
  margin-bottom: 6px;
  font-size: 20px;
  font-weight: bold;
}
.info p {
  height: 24px;
  white-space: nowrap;
}
.cjk {
  font-family: "Noto Sans CJK SC", sans-serif;
  font-size: 23px;
}
.info .cjk {
  font-size: 24px;
  font-weight: 300;
}

/* drawing area */
.workspace {
  flex: 1;
  display: grid;
  grid-template-columns: 1fr 24px;
  grid-template-rows: 1fr 24px;
  border: 1px solid #8ba3bb;
  background: #efefef;
}
.canvas {
  position: relative;
  overflow: hidden;
  border-radius: 0 0 4px 0;
  background: #fff;
}
.sheet {
  position: absolute;
}
.device-name {
  font-size: 18px;
  text-anchor: middle;
  fill: #1c1c1c;
}
.port-name {
  font-size: 16px;
}
.tag {
  position: absolute;
  height: 25px;
  padding: 1px 5px 0 4px;
  background: #90ee90;
  font: 18px/22px "DejaVu Sans Mono", monospace;
  white-space: pre;
  color: #1c1c1c;
}
.note {
  position: absolute;
  left: 1417px;
  top: 751px;
  width: 619px;
  height: 143px;
  overflow: hidden;
  background: #90ee90;
  font: 18px/24px "DejaVu Sans Mono", monospace;
}
.note p {
  height: 24px;
  padding-left: 3px;
  white-space: nowrap;
}
.note p:first-child {
  margin-top: -6px;
}
.thumb-y {
  width: 3px;
  height: 482px;
  margin: 25px 0 0 11px;
  background: #858585;
}
.thumb-x {
  width: 72.5%;
  height: 3px;
  margin: 11px 0 0 25px;
  background: #858585;
}
.drawer-handle {
  position: absolute;
  right: 0;
  top: 566px;
  width: 6px;
  height: 82px;
  border-radius: 4px 0 0 4px;
  background: #d3e3f0;
}
.drawer-handle::after {
  content: '';
  position: absolute;
  left: 1px;
  top: 36px;
  border: 5px solid transparent;
  border-left: 0;
  border-right: 4px solid #3d6286;
}

/* status bar */
.statusbar {
  position: relative;
  display: flex;
  align-items: center;
  justify-content: space-between;
  height: 34px;
  padding: 0 26px 0 14px;
  border-top: 2px solid #8fa4b6;
  border-radius: 0 0 6px 6px;
  background: linear-gradient(#dfebf5, #bcd4e5);
  font: 21px/34px "Noto Sans", "Noto Sans CJK SC", sans-serif;
  color: #416f98;
}
.statusbar a {
  color: #2f6492;
}
.grip {
  position: absolute;
  right: 4px;
  bottom: 2px;
}
</style>
